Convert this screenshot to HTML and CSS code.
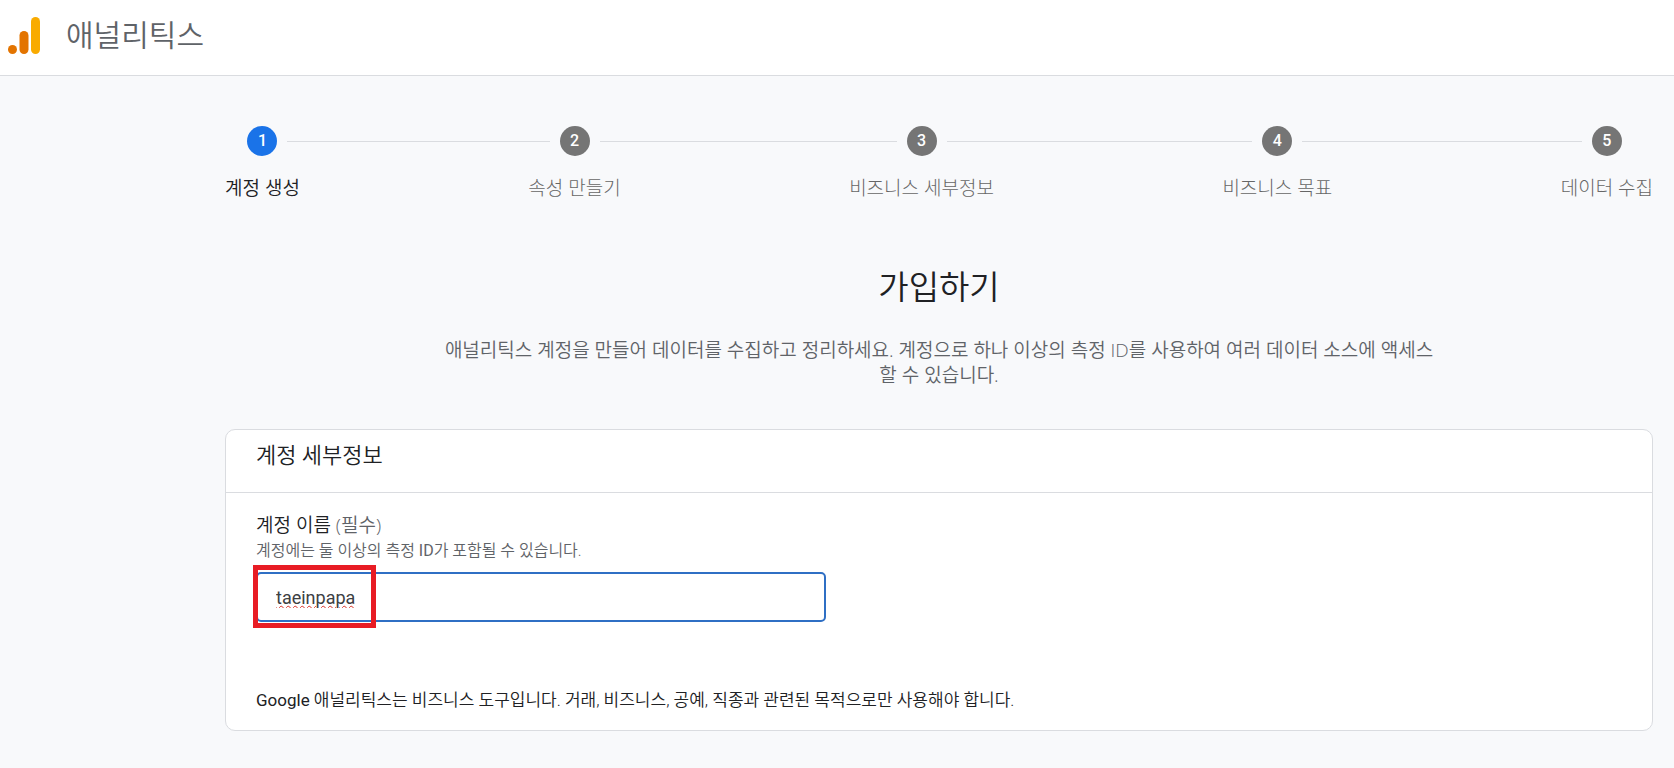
FILE: index.html
```html
<!DOCTYPE html>
<html lang="ko">
<head>
<meta charset="utf-8">
<title>애널리틱스</title>
<link rel="stylesheet" href="styles.css">
</head>
<body>
<header class="topbar">
  <svg class="logo" width="32" height="37" viewBox="0 0 32 37" aria-hidden="true">
    <rect x="23" y="0" width="9" height="37" rx="4.5" fill="#f9ab00"/>
    <rect x="11.500" y="14" width="9" height="23" rx="4.500" fill="#e37400"/>
    <circle cx="4.500" cy="32.500" r="4.500" fill="#e37400"/>
  </svg>
  <span class="brand">애널리틱스</span>
</header>
<main class="page">
  <ol class="steps">
    <li class="step step-first current" aria-current="step">
      <div class="core"><div class="marker"><span class="seg blank"></span><span class="dot">1</span><span class="seg"></span></div><span class="step-label">계정 생성</span></div>
      <span class="rail"></span>
    </li>
    <li class="step">
      <span class="rail"></span>
      <div class="core"><div class="marker"><span class="seg"></span><span class="dot">2</span><span class="seg"></span></div><span class="step-label">속성 만들기</span></div>
      <span class="rail"></span>
    </li>
    <li class="step">
      <span class="rail"></span>
      <div class="core"><div class="marker"><span class="seg"></span><span class="dot">3</span><span class="seg"></span></div><span class="step-label">비즈니스 세부정보</span></div>
      <span class="rail"></span>
    </li>
    <li class="step">
      <span class="rail"></span>
      <div class="core"><div class="marker"><span class="seg"></span><span class="dot">4</span><span class="seg"></span></div><span class="step-label">비즈니스 목표</span></div>
      <span class="rail"></span>
    </li>
    <li class="step step-last">
      <span class="rail"></span>
      <div class="core"><div class="marker"><span class="seg"></span><span class="dot">5</span><span class="seg blank"></span></div><span class="step-label">데이터 수집</span></div>
    </li>
  </ol>
  <h1 class="title">가입하기</h1>
  <p class="intro">애널리틱스 계정을 만들어 데이터를 수집하고 정리하세요. 계정으로 하나 이상의 측정 ID를 사용하여 여러 데이터 소스에 액세스할 수 있습니다.</p>
  <section class="card">
    <h2 class="card-title">계정 세부정보</h2>
    <div class="card-body">
      <label class="field-label" for="account">계정 이름 <span class="required">(필수)</span></label>
      <p class="hint" id="account-hint">계정에는 둘 이상의 측정 <span class="latin">ID</span>가 포함될 수 있습니다.</p>
      <div class="field">
        <input class="input" id="account" type="text" value="taeinpapa" aria-describedby="account-hint">
        <span class="highlight"></span>
      </div>
      <p class="note"><span class="latin">Google</span> 애널리틱스는 비즈니스 도구입니다. 거래, 비즈니스, 공예, 직종과 관련된 목적으로만 사용해야 합니다.</p>
    </div>
  </section>
</main>
</body>
</html>
```
FILE: styles.css
```css
* { box-sizing: border-box; }
body {
  margin: 0;
  background: #f8f9fb;
  color: #202124;
  font-family: Roboto, "Noto Sans CJK KR", sans-serif;
  font-weight: 350;
}
h1, h2, p, ol { margin: 0; padding: 0; font-weight: inherit; }
.latin { font-weight: 400; }
.topbar {
  display: flex;
  align-items: center;
  gap: 26px;
  height: 76px;
  padding: 0 8px 4px;
  background: #fff;
  border-bottom: 1px solid #dadce0;
}
.brand { font-size: 30px; line-height: 38px; color: #5f6368; }
.page { padding: 50px 21px 38px 225px; }
.steps { display: flex; list-style: none; }
.step { display: flex; flex: 2 1 auto; color: #666; }
.step-first, .step-last { flex-grow: 1; }
.rail { flex: 1; height: 1px; margin-top: 15px; background: #dadce0; }
.core { display: flex; flex-direction: column; gap: 19px; }
.marker { display: flex; align-items: center; }
.seg { flex: 1; height: 1px; background: #dadce0; }
.blank { background: none; }
.dot {
  width: 30px;
  height: 30px;
  margin: 0 10px;
  border-radius: 50%;
  background: #757575;
  color: #fff;
  font-size: 16px;
  font-weight: 500;
  line-height: 29px;
  text-align: center;
}
.current .dot { background: #1a73e8; }
.current { color: #202124; }
.step-label { font-family: "Open Sans", "Noto Sans CJK KR", sans-serif; font-size: 19px; line-height: 26px; white-space: nowrap; }
.step:not(.current) .step-label { font-weight: 300; }
.title { margin-top: 64px; font-size: 33px; line-height: 46px; text-align: center; }
.intro {
  max-width: 1000px;
  margin: 27px auto 0;
  color: #5f6368;
  font-family: "Open Sans", "Noto Sans CJK KR", sans-serif;
  font-size: 19px;
  line-height: 25px;
  text-align: center;
}
.card {
  margin-top: 41px;
  border: 1px solid #dadce0;
  border-radius: 10px;
  background: #fff;
}
.card-title {
  padding: 10px 30px 20px;
  border-bottom: 1px solid #dadce0;
  font-size: 22px;
  line-height: 32px;
}
.card-body { padding: 18px 30px; }
.field-label { display: block; font-family: "Open Sans", "Noto Sans CJK KR", sans-serif; font-size: 19px; line-height: 28px; }
.required { color: #5f6368; }
.hint { color: #5f6368; font-size: 16px; line-height: 24px; }
.field { position: relative; max-width: 570px; margin-top: 9px; }
.input {
  display: block;
  width: 100%;
  height: 50px;
  padding: 0 18px;
  border: 2px solid #2f6fc4;
  border-radius: 5px;
  background: #fff;
  color: #3c4043;
  font: 400 18px Roboto, sans-serif;
  text-decoration: underline wavy #d93025 1px;
  outline: 0;
}
.highlight {
  position: absolute;
  top: -7px;
  left: -3px;
  width: 123px;
  height: 63px;
  border: 5px solid #e81c24;
  pointer-events: none;
}
.note { margin-top: 66px; font-size: 17px; line-height: 24px; }
```
